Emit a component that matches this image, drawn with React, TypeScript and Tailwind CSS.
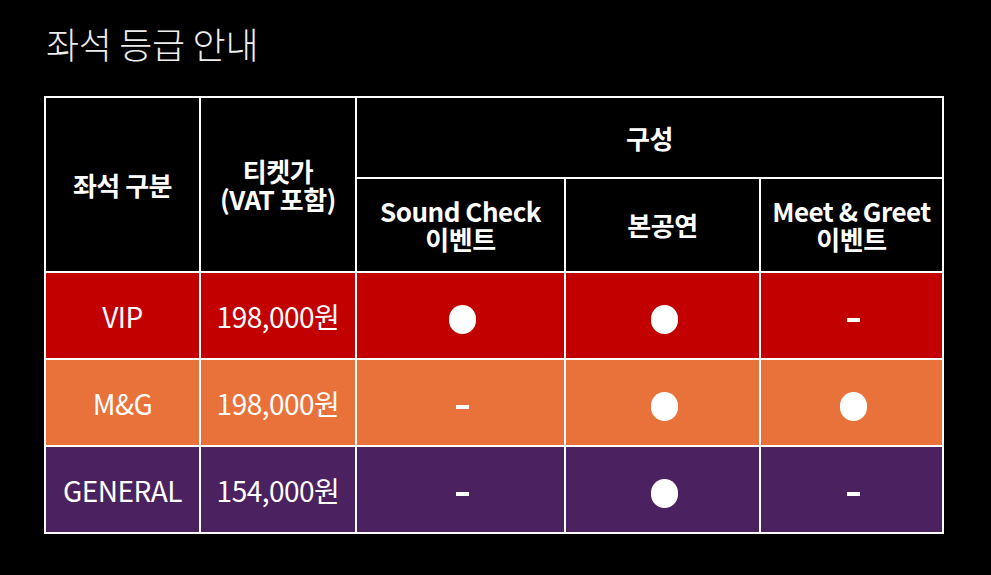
const rows = [
  { name: 'VIP', price: '198,000원', bg: 'bg-[#c30000]', marks: [true, true, false] },
  { name: 'M&G', price: '198,000원', bg: 'bg-[#e9713a]', marks: [false, true, true] },
  { name: 'GENERAL', price: '154,000원', bg: 'bg-[#4b2160]', marks: [false, true, false] },
]

const Mark = ({ on }: { on: boolean }) =>
  on ? (
    <span className="inline-block w-[27px] h-[29px] rounded-full bg-white align-middle ml-[3px]" />
  ) : (
    <span className="inline-block w-[13px] h-[4px] bg-white align-middle ml-[3px]" />
  )

export default function App() {
  const th = 'border-2 border-white text-white font-bold text-[26px] leading-[28px] tracking-[-0.5px] text-center align-middle'
  const td = 'border-2 border-white text-white font-normal text-[28px] tracking-[-0.5px] text-center align-middle'

  return (
    <div
      className="w-[991px] h-[575px] bg-black pt-[18px] pl-[44px]"
      style={{ fontFamily: '"Noto Sans CJK KR", "Noto Sans", sans-serif' }}
    >
      <h1 className="text-[36px] leading-[50px] text-[#ededed] font-light tracking-[-0.3px] pl-[2px] mb-[28px]">
        좌석 등급 안내
      </h1>

      <table className="border-collapse w-[898px] table-fixed">
        <colgroup>
          <col className="w-[155px]" />
          <col className="w-[156px]" />
          <col className="w-[209px]" />
          <col className="w-[195px]" />
          <col className="w-[183px]" />
        </colgroup>
        <thead>
          <tr className="h-[81px]">
            <th rowSpan={2} className={th}>
              좌석 구분
            </th>
            <th rowSpan={2} className={th}>
              티켓가
              <br />
              (VAT 포함)
            </th>
            <th colSpan={3} className={th}>
              구성
            </th>
          </tr>
          <tr className="h-[94px]">
            <th className={th}>
              Sound Check
              <br />
              이벤트
            </th>
            <th className={th}>본공연</th>
            <th className={th}>
              Meet &amp; Greet
              <br />
              이벤트
            </th>
          </tr>
        </thead>
        <tbody>
          {rows.map((r) => (
            <tr key={r.name} className={`h-[87px] ${r.bg}`}>
              <td className={td}>{r.name}</td>
              <td className={td}>{r.price}</td>
              {r.marks.map((m, i) => (
                <td key={i} className={td}>
                  <Mark on={m} />
                </td>
              ))}
            </tr>
          ))}
        </tbody>
      </table>
    </div>
  )
}
